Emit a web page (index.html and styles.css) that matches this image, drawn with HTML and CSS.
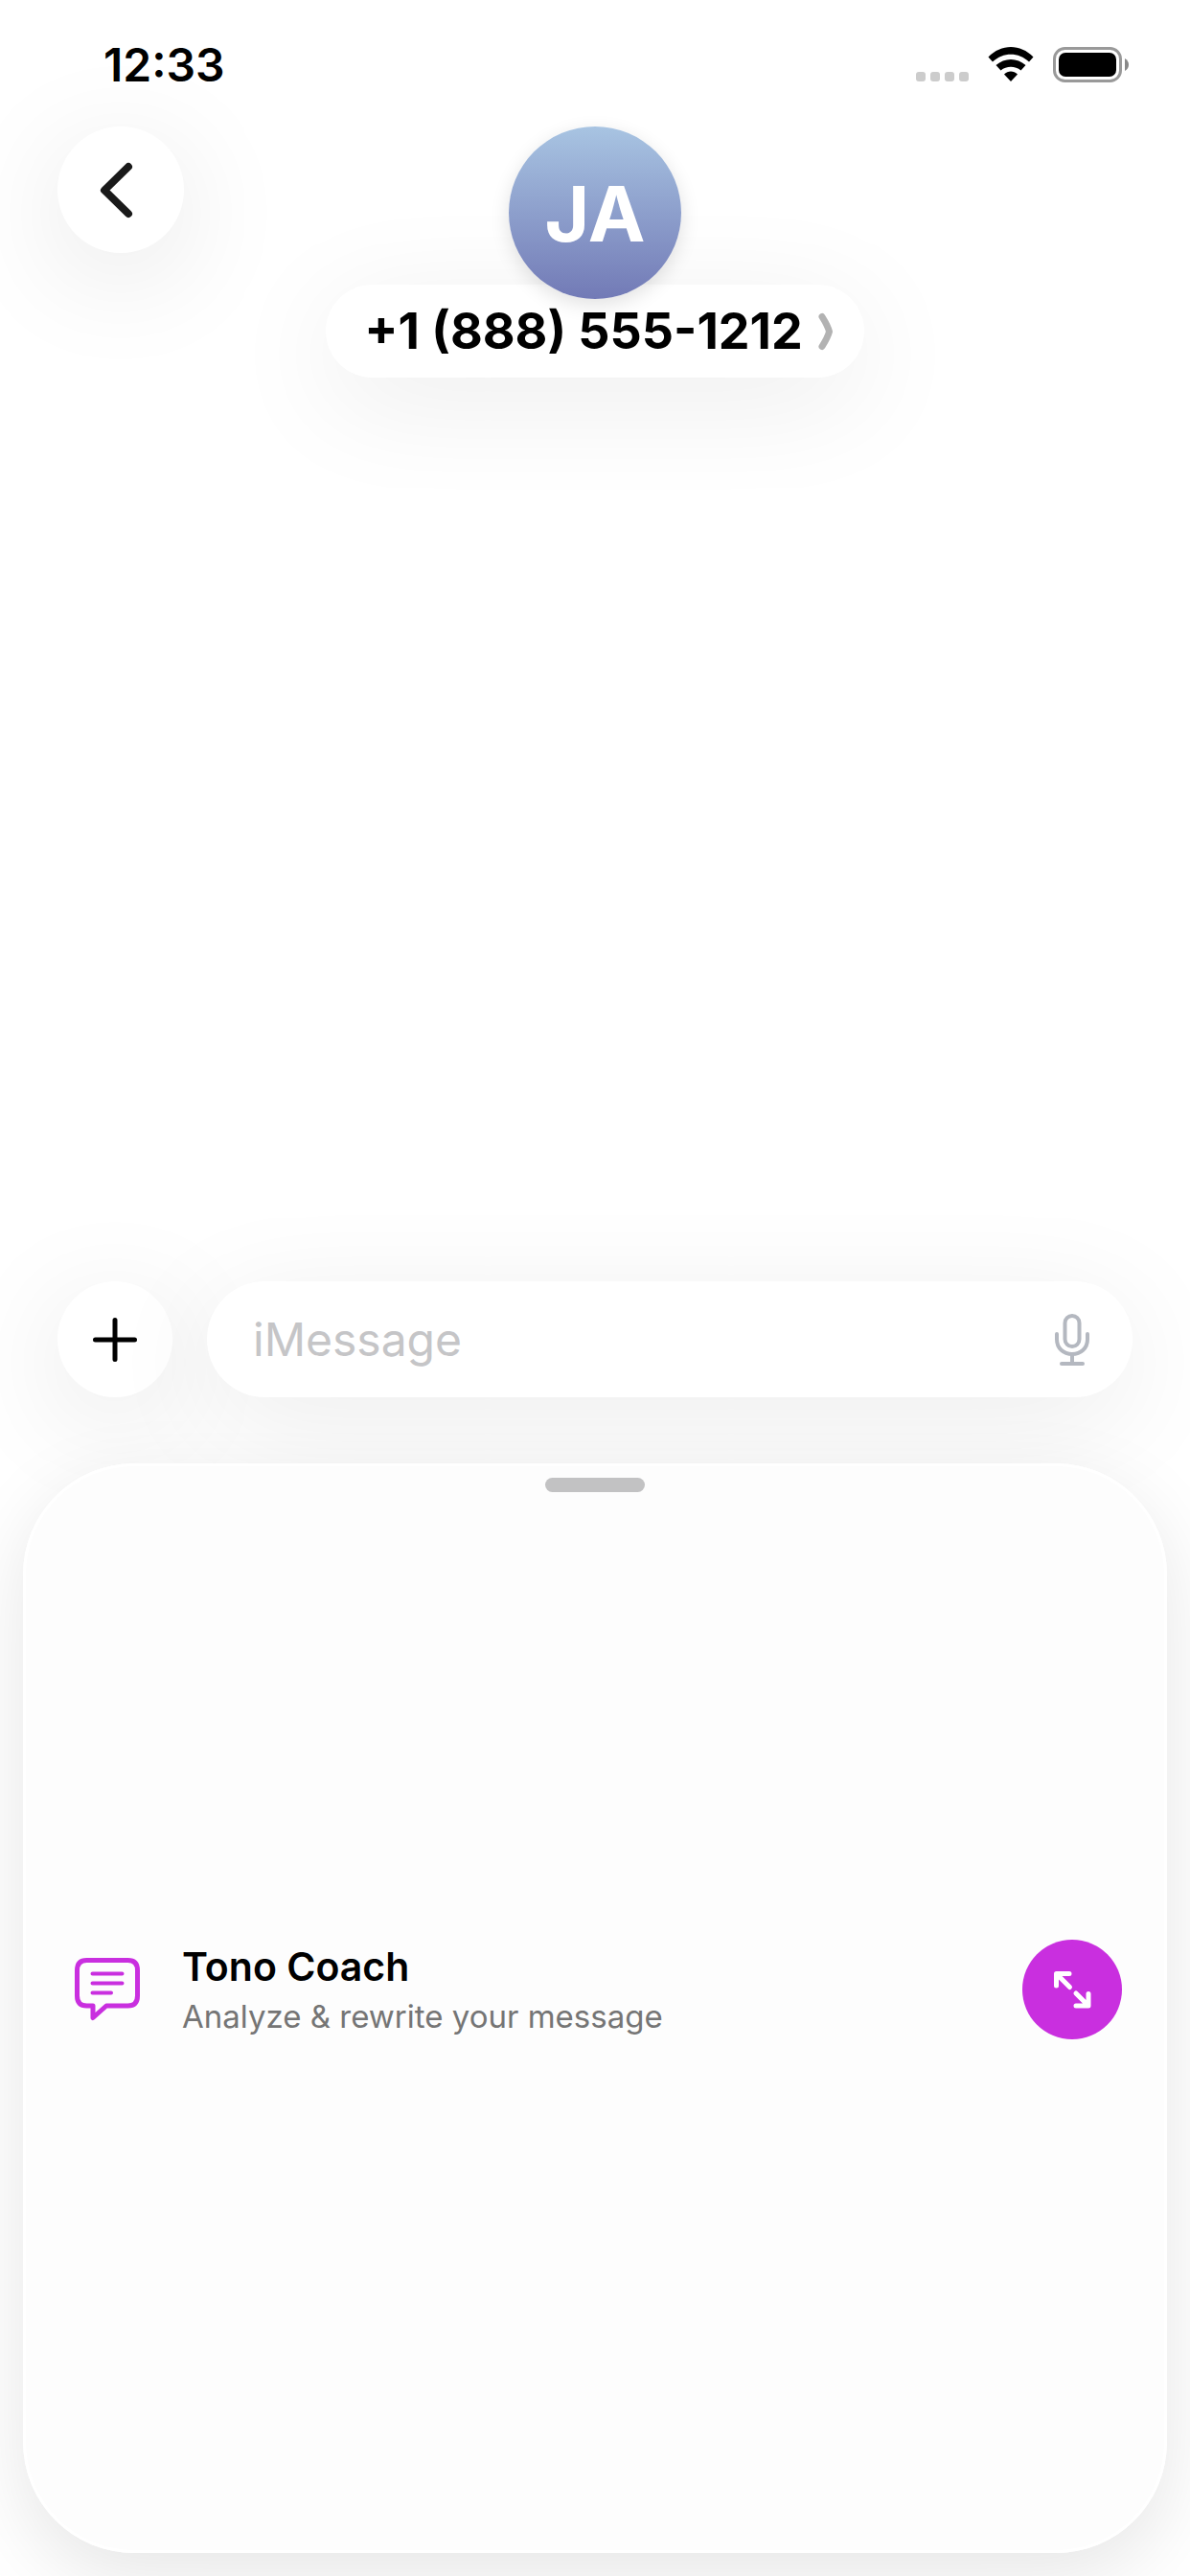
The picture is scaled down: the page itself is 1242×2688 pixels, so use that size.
FILE: index.html
```html
<!DOCTYPE html>
<html lang="en">
<head>
    <meta charset="UTF-8">
    <meta name="viewport" content="width=device-width, initial-scale=1.0">
    <title>Messages</title>
    <link rel="stylesheet" href="styles.css">
</head>
<body>
    <div class="status-bar">
        <span class="time">12:33</span>
        <div class="status-icons">
            <div class="signal"><i></i><i></i><i></i><i></i></div>
            <svg class="wifi" width="48" height="38" viewBox="0 0 48 38">
                <path d="M0.5 10.5C14 -3.500 34 -3.500 47.5 10.5L43 15.500C32 5 16 5 5 15.500Z"/>
                <path d="M8.500 19C17.500 11 30.500 11 39.500 19L34.500 24.500C28.500 19.500 19.500 19.500 13.500 24.500Z"/>
                <path d="M17 28.500C21 24.500 27 24.500 31 28.500L24 36Z"/>
            </svg>
            <svg class="battery" width="80" height="38" viewBox="0 0 80 38">
                <rect x="1.500" y="1.500" width="69" height="34" rx="11" fill="none" stroke="#999" stroke-width="3"/>
                <rect x="6" y="6" width="60" height="25" rx="7"/>
                <path d="M75 12Q79 14.500 79 18.500Q79 22.500 75 25Z" fill="#888"/>
            </svg>
        </div>
    </div>

    <header class="chat-header">
        <button class="round-btn back-btn" aria-label="Back">
            <svg width="40" height="64" viewBox="0 0 40 64">
                <path d="M32 8L7 32.500L32 57" fill="none" stroke="#1a1a1a" stroke-width="8" stroke-linecap="round" stroke-linejoin="round"/>
            </svg>
        </button>
        <div class="contact">
            <div class="avatar">JA</div>
            <button class="contact-name">
                <span>+1 (888) 555-1212</span>
                <svg width="16" height="40" viewBox="0 0 16 40">
                    <path d="M4 4.500Q10 14 11.500 20Q10 26 4 35.500" fill="none" stroke="#b2b2b2" stroke-width="7" stroke-linecap="round" stroke-linejoin="round"/>
                </svg>
            </button>
        </div>
    </header>

    <main class="thread"></main>

    <form class="composer">
        <button type="button" class="round-btn add-btn" aria-label="Add">
            <svg width="46" height="46" viewBox="0 0 46 46">
                <path d="M23 2.500V43.500M2.500 23H43.500" stroke="#000" stroke-width="5" stroke-linecap="round"/>
            </svg>
        </button>
        <div class="message-box">
            <input type="text" placeholder="iMessage" aria-label="iMessage">
            <button type="button" class="mic-btn" aria-label="Dictate">
                <svg width="36" height="54" viewBox="0 0 36 54" fill="none" stroke="#b4b8c0" stroke-width="4" stroke-linecap="round">
                    <rect x="10.500" y="2" width="15" height="32" rx="7.500"/>
                    <path d="M2 21V26.500C2 36 9 42 18 42S34 36 34 26.500V21"/>
                    <path d="M18 42V51"/>
                    <path d="M7 52H29"/>
                </svg>
            </button>
        </div>
    </form>

    <section class="sheet">
        <div class="grabber"></div>
        <div class="app-row">
            <svg class="app-icon" width="68" height="66" viewBox="0 0 68 66" fill="none" stroke="#c92fdf" stroke-linecap="round" stroke-linejoin="round">
                <path stroke-width="5" d="M12.500 2.500H55.500Q65.500 2.500 65.500 13V39.500Q65.500 50 55.500 50H33L19 62.500V50H12.500Q2.500 50 2.500 39.500V13Q2.500 2.500 12.500 2.500Z"/>
                <path stroke-width="4" d="M18.500 16.500H49.500M18.500 26.500H49.500M18.500 36.500H38"/>
            </svg>
            <div class="app-text">
                <h2>Tono Coach</h2>
                <p>Analyze &amp; rewrite your message</p>
            </div>
            <button class="expand-btn" aria-label="Expand">
                <svg width="40" height="40" viewBox="0 0 40 40" fill="none" stroke="#fff" stroke-width="5" stroke-linecap="round" stroke-linejoin="round">
                    <path d="M17 3.500H3.500V16M4.500 4.500L17.500 17.500"/>
                    <path d="M24 37H37V24.500M36 36L24 24"/>
                </svg>
            </button>
        </div>
    </section>
</body>
</html>
```
FILE: styles.css
```css
* {
    box-sizing: border-box;
}
body {
    margin: 0;
    min-height: 100vh;
    display: flex;
    flex-direction: column;
    overflow-x: hidden;
    background-color: #fff;
    color: #000;
    font-family: Inter, "Liberation Sans", sans-serif;
}
button {
    border: none;
    padding: 0;
    color: inherit;
    font-family: inherit;
    cursor: pointer;
}
svg {
    display: block;
    flex: none;
}

/* status bar */
.status-bar {
    display: flex;
    justify-content: space-between;
    align-items: center;
    height: 132px;
    padding: 4px 63px 0 108px;
}
.time {
    font-size: 48px;
    line-height: 60px;
    font-weight: 600;
}
.status-icons {
    display: flex;
    align-items: flex-end;
    gap: 20px;
}
.signal {
    display: flex;
    gap: 5px;
    padding-bottom: 2px;
}
.signal i {
    width: 10px;
    height: 10px;
    border-radius: 3px;
    background-color: #ccc;
}

/* chat header */
.chat-header {
    display: grid;
    grid-template-columns: 1fr auto 1fr;
    align-items: start;
    padding: 0 60px;
}
.round-btn {
    display: flex;
    align-items: center;
    justify-content: center;
    border-radius: 50%;
    background-color: #fff;
    box-shadow: 0 24px 120px rgba(0, 0, 0, 0.1);
}
.back-btn {
    width: 132px;
    height: 132px;
    padding-right: 8px;
}
.contact {
    display: flex;
    flex-direction: column;
    align-items: center;
}
.avatar {
    z-index: 1;
    width: 180px;
    height: 180px;
    border-radius: 50%;
    background: linear-gradient(#a8c4e2, #727ab6);
    box-shadow: 0 6px 20px rgba(0, 0, 0, 0.12);
    color: #fff;
    font-size: 80px;
    line-height: 182px;
    font-weight: 700;
    text-align: center;
}
.contact-name {
    display: flex;
    align-items: center;
    gap: 16px;
    margin-top: -15px;
    padding: 0 32px 0 40px;
    height: 97px;
    border-radius: 49px;
    background-color: #fff;
    box-shadow: 0 24px 120px rgba(0, 0, 0, 0.08);
    font-size: 52px;
    font-weight: 700;
}

.thread {
    flex: 83 1 0;
}

/* message composer */
.composer {
    display: flex;
    gap: 36px;
    padding: 0 60px 69px;
}
.add-btn {
    width: 120px;
    height: 121px;
}
.message-box {
    flex: 1;
    display: flex;
    align-items: center;
    padding: 0 45px 0 48px;
    height: 121px;
    border-radius: 61px;
    background-color: #fff;
    box-shadow: 0 24px 120px rgba(0, 0, 0, 0.08);
}
.message-box input {
    flex: 1;
    min-width: 0;
    border: none;
    padding: 0;
    outline: none;
    background: none;
    font-family: inherit;
    font-size: 48px;
}
.message-box input::placeholder {
    color: #c5c5c7;
    opacity: 1;
}
.mic-btn {
    background: none;
}

/* app sheet */
.sheet {
    flex: 100 1 0;
    display: flex;
    flex-direction: column;
    margin: 0 24px 24px;
    border-radius: 116px;
    background-color: #fdfdfd;
    box-shadow: inset 0 0 0 3px #fff, 0 24px 80px rgba(0, 0, 0, 0.1);
}
.grabber {
    align-self: center;
    width: 104px;
    height: 15px;
    margin-top: 15px;
    border-radius: 8px;
    background-color: #c2c2c3;
}
.app-row {
    flex: 1;
    display: flex;
    align-items: center;
    padding: 0 47px 70px 54px;
}
.app-text {
    flex: 1;
    padding-left: 44px;
}
.app-text h2 {
    margin: 0;
    font-size: 41px;
    line-height: 56px;
    font-weight: 600;
}
.app-text p {
    margin: 0;
    color: #757575;
    font-size: 33px;
    line-height: 48px;
}
.expand-btn {
    display: flex;
    align-items: center;
    justify-content: center;
    width: 104px;
    height: 104px;
    border-radius: 50%;
    background-color: #c92fdf;
}
```
